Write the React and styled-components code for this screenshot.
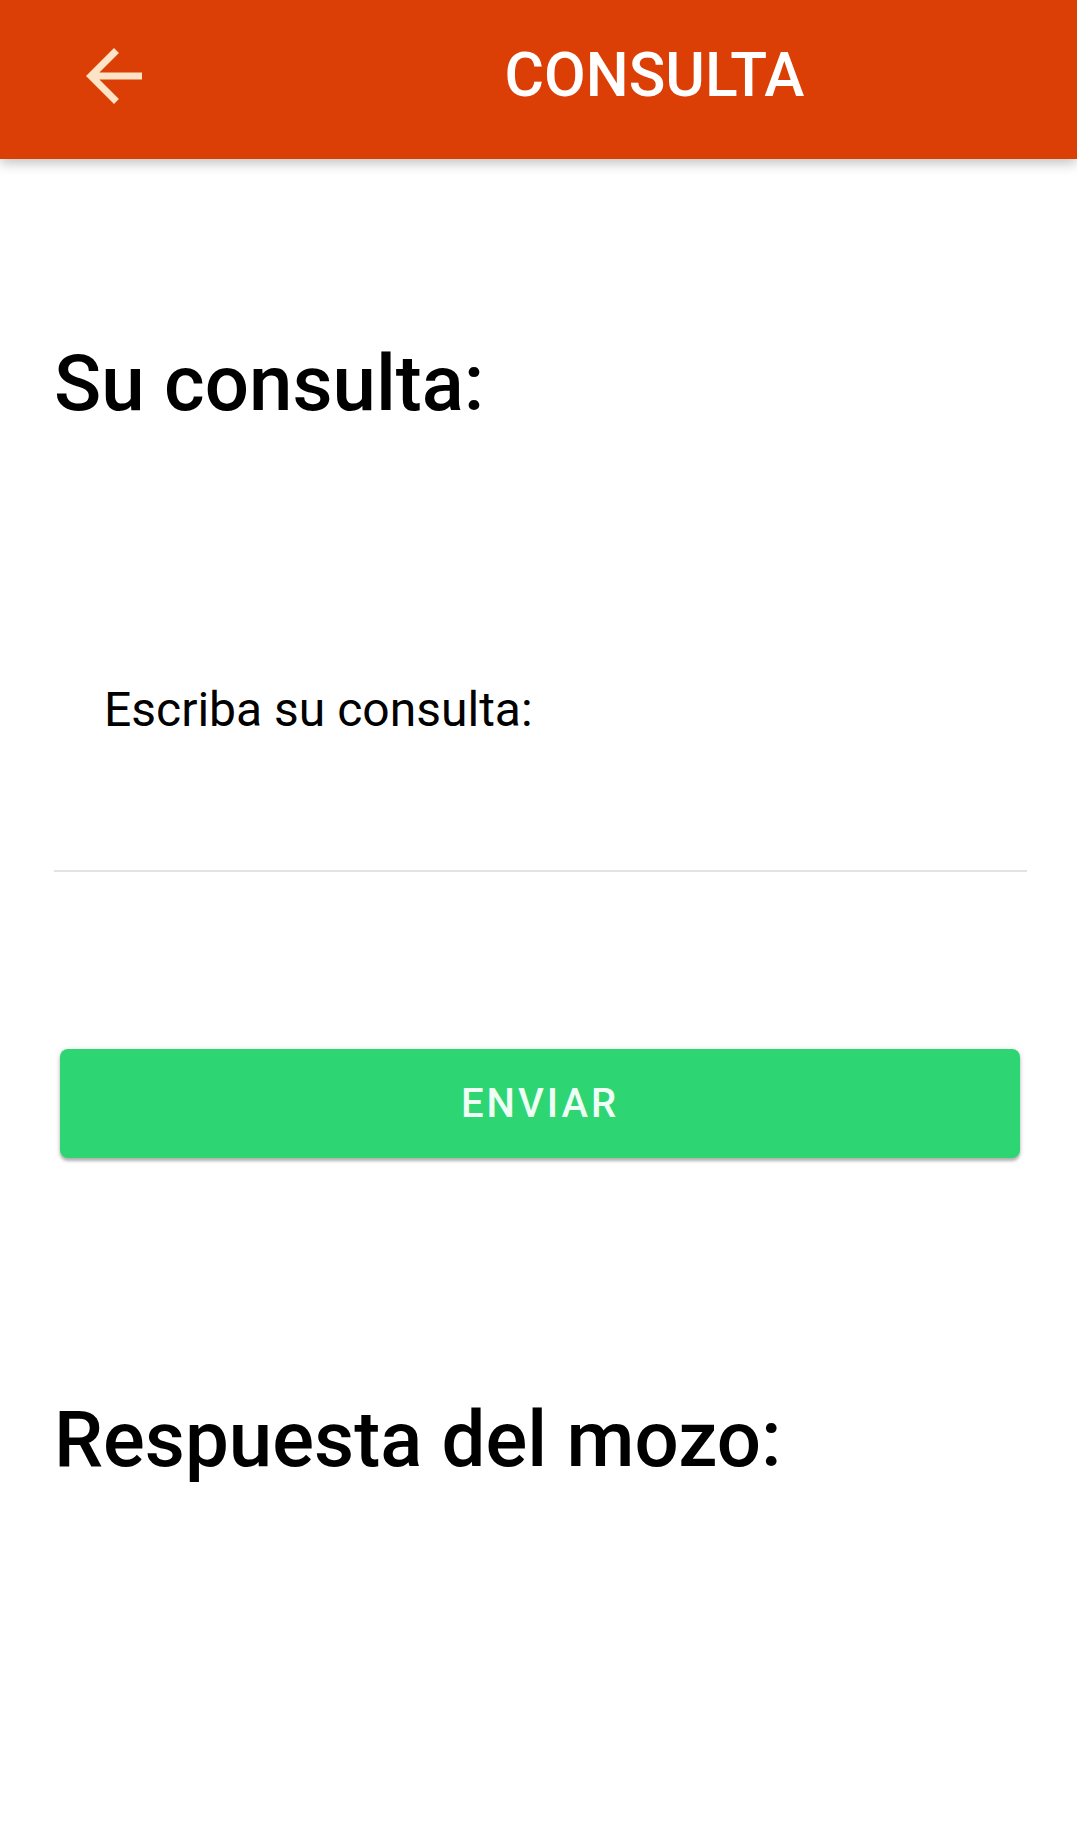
import React from "react";
import styled, { createGlobalStyle } from "styled-components";

const GlobalStyle = createGlobalStyle`
  html, body {
    margin: 0;
    padding: 0;
    background: #ffffff;
    font-family: Roboto, "Noto Sans", "Liberation Sans", sans-serif;
  }
`;

const Screen = styled.div`
  min-height: 1838px;
  background: #ffffff;
`;

const Toolbar = styled.header`
  box-sizing: border-box;
  height: 159px;
  padding: 0 0 8px 72px;
  display: flex;
  align-items: center;
  background: #dc3f05;
  box-shadow: 0 4px 12px rgba(0, 0, 0, 0.25);
  position: relative;
  z-index: 1;
`;

const BackButton = styled.button`
  width: 84px;
  height: 84px;
  padding: 0;
  border: none;
  background: transparent;
  display: flex;
  align-items: center;
  justify-content: center;
  cursor: pointer;
`;

const Title = styled.h1`
  flex: 1;
  margin: 0;
  padding-left: 76px;
  text-align: center;
  color: #ffffff;
  font-size: 60.5px;
  line-height: 60px;
  font-weight: 500;
`;

const Content = styled.main`
  padding: 0 50px 0 54px;
  display: flex;
  flex-direction: column;
`;

const SectionHeading = styled.h2`
  margin: ${(p) => p.$top}px 0 0;
  color: #000000;
  font-size: 78px;
  line-height: 80px;
  font-weight: 500;
`;

const Field = styled.label`
  margin-top: 262px;
  padding: 0 0 136px 50px;
  border-bottom: 2px solid #e3e3e3;
  display: block;
`;

const FieldLabel = styled.span`
  display: block;
  color: #000000;
  font-size: 48px;
  line-height: 48px;
`;

const SendButton = styled.button`
  margin: 177px 7px 0 6px;
  height: 109px;
  border: none;
  border-radius: 8px;
  background: #2ed573;
  color: #f0fff5;
  font-family: Roboto, "Noto Sans", sans-serif;
  font-size: 40px;
  font-weight: 500;
  letter-spacing: 3px;
  box-shadow: 0 3px 3px rgba(0, 0, 0, 0.25), 0 1px 6px rgba(0, 0, 0, 0.12);
  cursor: pointer;
`;

const ArrowBack = () => (
  <svg width="84" height="84" viewBox="0 0 24 24">
    <path
      fill="#fde4c6"
      d="M20 11H7.83l5.59-5.59L12 4l-8 8 8 8 1.41-1.41L7.83 13H20v-2z"
    />
  </svg>
);

export default function App() {
  return (
    <Screen>
      <GlobalStyle />
      <Toolbar>
        <BackButton aria-label="Volver">
          <ArrowBack />
        </BackButton>
        <Title>CONSULTA</Title>
      </Toolbar>
      <Content>
        <SectionHeading $top={185}>Su consulta:</SectionHeading>
        <Field>
          <FieldLabel>Escriba su consulta:</FieldLabel>
        </Field>
        <SendButton>ENVIAR</SendButton>
        <SectionHeading $top={242}>Respuesta del mozo:</SectionHeading>
      </Content>
    </Screen>
  );
}
